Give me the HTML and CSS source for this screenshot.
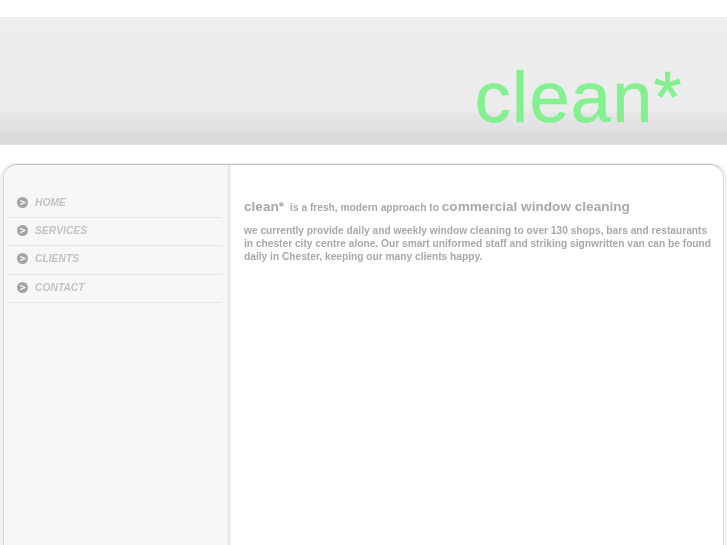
FILE: index.html
```html
<!DOCTYPE html>
<html lang="en">
<head>
<meta charset="utf-8">
<title>clean*</title>
<link rel="stylesheet" href="styles.css">
</head>
<body>
<header class="banner">
  <div class="logo">clean*</div>
</header>
<div class="panel">
  <nav class="sidebar">
    <ul class="menu">
      <li class="menu-item"><svg class="bullet" viewBox="0 0 11 11"><circle cx="5.5" cy="5.5" r="5.5" fill="#a3a3a3"/><path d="M3.2 3.4 7.8 5.5 3.2 7.6" fill="none" stroke="#f6f6f6" stroke-width="1.3"/></svg><a class="menu-link">HOME</a></li>
      <li class="menu-item"><svg class="bullet" viewBox="0 0 11 11"><circle cx="5.5" cy="5.5" r="5.5" fill="#a3a3a3"/><path d="M3.2 3.4 7.8 5.5 3.2 7.6" fill="none" stroke="#f6f6f6" stroke-width="1.3"/></svg><a class="menu-link">SERVICES</a></li>
      <li class="menu-item"><svg class="bullet" viewBox="0 0 11 11"><circle cx="5.5" cy="5.5" r="5.5" fill="#a3a3a3"/><path d="M3.2 3.4 7.8 5.5 3.2 7.6" fill="none" stroke="#f6f6f6" stroke-width="1.3"/></svg><a class="menu-link">CLIENTS</a></li>
      <li class="menu-item"><svg class="bullet" viewBox="0 0 11 11"><circle cx="5.5" cy="5.5" r="5.5" fill="#a3a3a3"/><path d="M3.2 3.4 7.8 5.5 3.2 7.6" fill="none" stroke="#f6f6f6" stroke-width="1.3"/></svg><a class="menu-link">CONTACT</a></li>
    </ul>
  </nav>
  <main class="content">
    <h1 class="title"><span class="brand">clean*</span><small class="tagline">is a fresh, modern approach to </small>commercial window cleaning</h1>
    <p class="intro">we currently provide daily and weekly window cleaning to over 130 shops, bars and restaurants in chester city centre alone. Our smart uniformed staff and striking signwritten van can be found daily in Chester, keeping our many clients happy.</p>
  </main>
</div>
</body>
</html>
```
FILE: styles.css
```css
html, body {
  margin: 0;
  padding: 0;
  height: 100%;
  overflow: hidden;
  background: #fff;
  font-family: "Liberation Sans", Arial, sans-serif;
}
.banner {
  margin-top: 17px;
  height: 128px;
  box-sizing: border-box;
  display: flex;
  justify-content: flex-end;
  align-items: flex-end;
  padding-right: 44px;
  background:
    repeating-linear-gradient(90deg, transparent 0 7px, #eaeae6 7px 14px, transparent 14px 42px) 0 93px / 440px 3px no-repeat,
    linear-gradient(#eeeeee 0, #ececec 95px, #e6e6e8 96px, #e1e1e3 114px, #dcdcdc 115px, #dcdcdc 127px, #e8e8e8 128px);
}
.logo {
  font-size: 72px;
  letter-spacing: 1.35px;
  line-height: 74px;
  height: 74px;
  margin-bottom: 11px;
  color: #84f090;
  -webkit-text-stroke: 0.6px #84f090;
  filter: blur(0.3px);
}
.panel {
  margin: 19px 3px 0;
  height: 400px;
  box-sizing: border-box;
  display: flex;
  background: #fff;
  border: 1px solid #dadada;
  border-top-color: #c4c4c4;
  border-bottom: 0;
  border-radius: 14px 14px 0 0;
  overflow: hidden;
  box-shadow: 3px 0 0 #f1f1f1, -3px 0 0 #f1f1f1, 0 -1px 0 #ececec;
}
.sidebar {
  width: 227px;
  flex: none;
  box-sizing: border-box;
  padding: 25px 5px 0 4px;
  background: #f7f7f7;
  border-right: 4px solid #ebebeb;
}
.menu {
  list-style: none;
  margin: 0;
  padding: 0;
}
.menu-item {
  height: 28.2px;
  box-sizing: border-box;
  display: flex;
  align-items: center;
  gap: 7px;
  padding: 0 0 2px 9px;
  border-bottom: 1px solid #e6e6e6;
}
.bullet {
  width: 11px;
  height: 11px;
  flex: none;
}
.menu-link {
  font-size: 10.3px;
  font-weight: bold;
  font-style: italic;
  color: #c4c4c4;
  filter: blur(0.3px);
}
.content {
  flex: 1;
  padding: 33px 8px 0 13px;
  color: #a9a9a9;
  filter: blur(0.3px);
}
.title {
  margin: 0;
  font-size: 13.6px;
  line-height: 17px;
  font-weight: bold;
}
.brand {
  margin-right: 6px;
}
.tagline {
  font-size: 10.2px;
}
.intro {
  margin: 8px 0 0;
  font-size: 10.2px;
  line-height: 13px;
  font-weight: bold;
}
```
